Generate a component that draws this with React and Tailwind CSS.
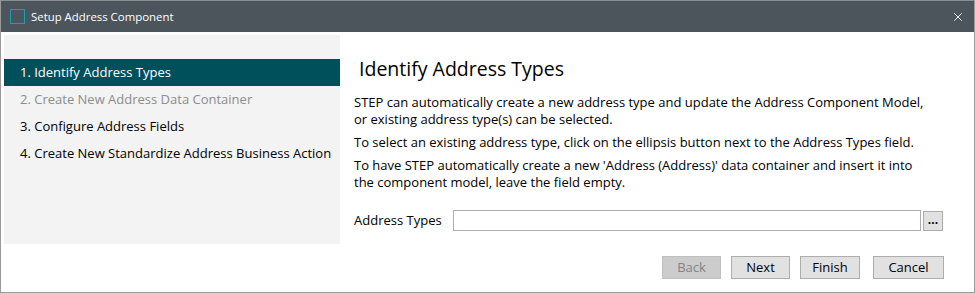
import { X } from 'lucide-react'

const steps = [
  { label: '1. Identify Address Types', state: 'active' },
  { label: '2. Create New Address Data Container', state: 'disabled' },
  { label: '3. Configure Address Fields', state: 'normal' },
  { label: '4. Create New Standardize Address Business Action', state: 'normal' },
]

/* ── Plain wizard button ── */
function WizardButton({ children, disabled, className = '' }) {
  return (
    <button
      disabled={disabled}
      className={
        'h-[23px] border text-[13px] leading-none ' +
        (disabled
          ? 'bg-[#cccccc] border-[#bfbfbf] text-[#838383] '
          : 'bg-[#e1e1e1] border-[#adadad] text-black ') +
        className
      }
    >
      {children}
    </button>
  )
}

export default function App() {
  return (
    <div
      className="w-[975px] h-[293px] flex flex-col bg-white border-x border-b border-[#9a9a9a] overflow-hidden"
      style={{ fontFamily: '"Open Sans", "Noto Sans", sans-serif' }}
    >
      {/* title bar */}
      <div className="h-[32px] shrink-0 bg-[#4c555b] border-t border-[#8a8f93] flex items-center pl-[9px] pr-[9px] text-white">
        <div className="w-[15px] h-[15px] border border-[#14a3b3]" />
        <span className="ml-[6px] text-[11.4px]">Setup Address Component</span>
        <X className="ml-auto w-[14px] h-[14px]" strokeWidth={1.5} />
      </div>

      <div className="flex-1 flex flex-col pt-[3px] px-[3px]">
        <div className="flex">
          {/* step list */}
          <div className="w-[338px] h-[209px] bg-[#f3f3f3] pt-[24px] flex flex-col">
            {steps.map((s) => (
              <div
                key={s.label}
                className={
                  'h-[27px] flex items-center pl-[16px] text-[13px] ' +
                  (s.state === 'active'
                    ? 'bg-[#00505c] text-white'
                    : s.state === 'disabled'
                      ? 'text-[#8c8c8c]'
                      : 'text-black')
                }
              >
                {s.label}
              </div>
            ))}
          </div>

          {/* content */}
          <div className="flex-1 pl-[14px] pr-[28px] pt-[21px] text-[13px] text-black">
            <h1 className="pl-[5px] text-[19.5px] leading-[26px]">Identify Address Types</h1>
            <div className="mt-[12px] max-w-[576px] leading-[17px] flex flex-col gap-[6px]">
              <p>
                STEP can automatically create a new address type and update the Address Component Model,
                or existing address type(s) can be selected.
              </p>
              <p>To select an existing address type, click on the ellipsis button next to the Address Types field.</p>
              <p>
                To have STEP automatically create a new 'Address (Address)' data container and insert it into
                the component model, leave the field empty.
              </p>
            </div>
            <div className="mt-[19px] flex items-center">
              <span className="w-[99px]">Address Types</span>
              <div className="w-[468px] h-[21px] border border-[#abadb3] bg-white" />
              <button className="ml-[2px] w-[20px] h-[20px] border border-[#adadad] bg-[#e1e1e1] text-[12px] font-bold leading-none pb-[2px]">
                ...
              </button>
            </div>
          </div>
        </div>

        {/* footer buttons */}
        <div className="mt-[12px] flex justify-end pr-[27px] gap-[10px]">
          <WizardButton disabled className="w-[59px]">Back</WizardButton>
          <WizardButton className="w-[59px]">Next</WizardButton>
          <WizardButton className="w-[60px]">Finish</WizardButton>
          <WizardButton className="w-[71px] ml-[3px]">Cancel</WizardButton>
        </div>
      </div>
    </div>
  )
}
